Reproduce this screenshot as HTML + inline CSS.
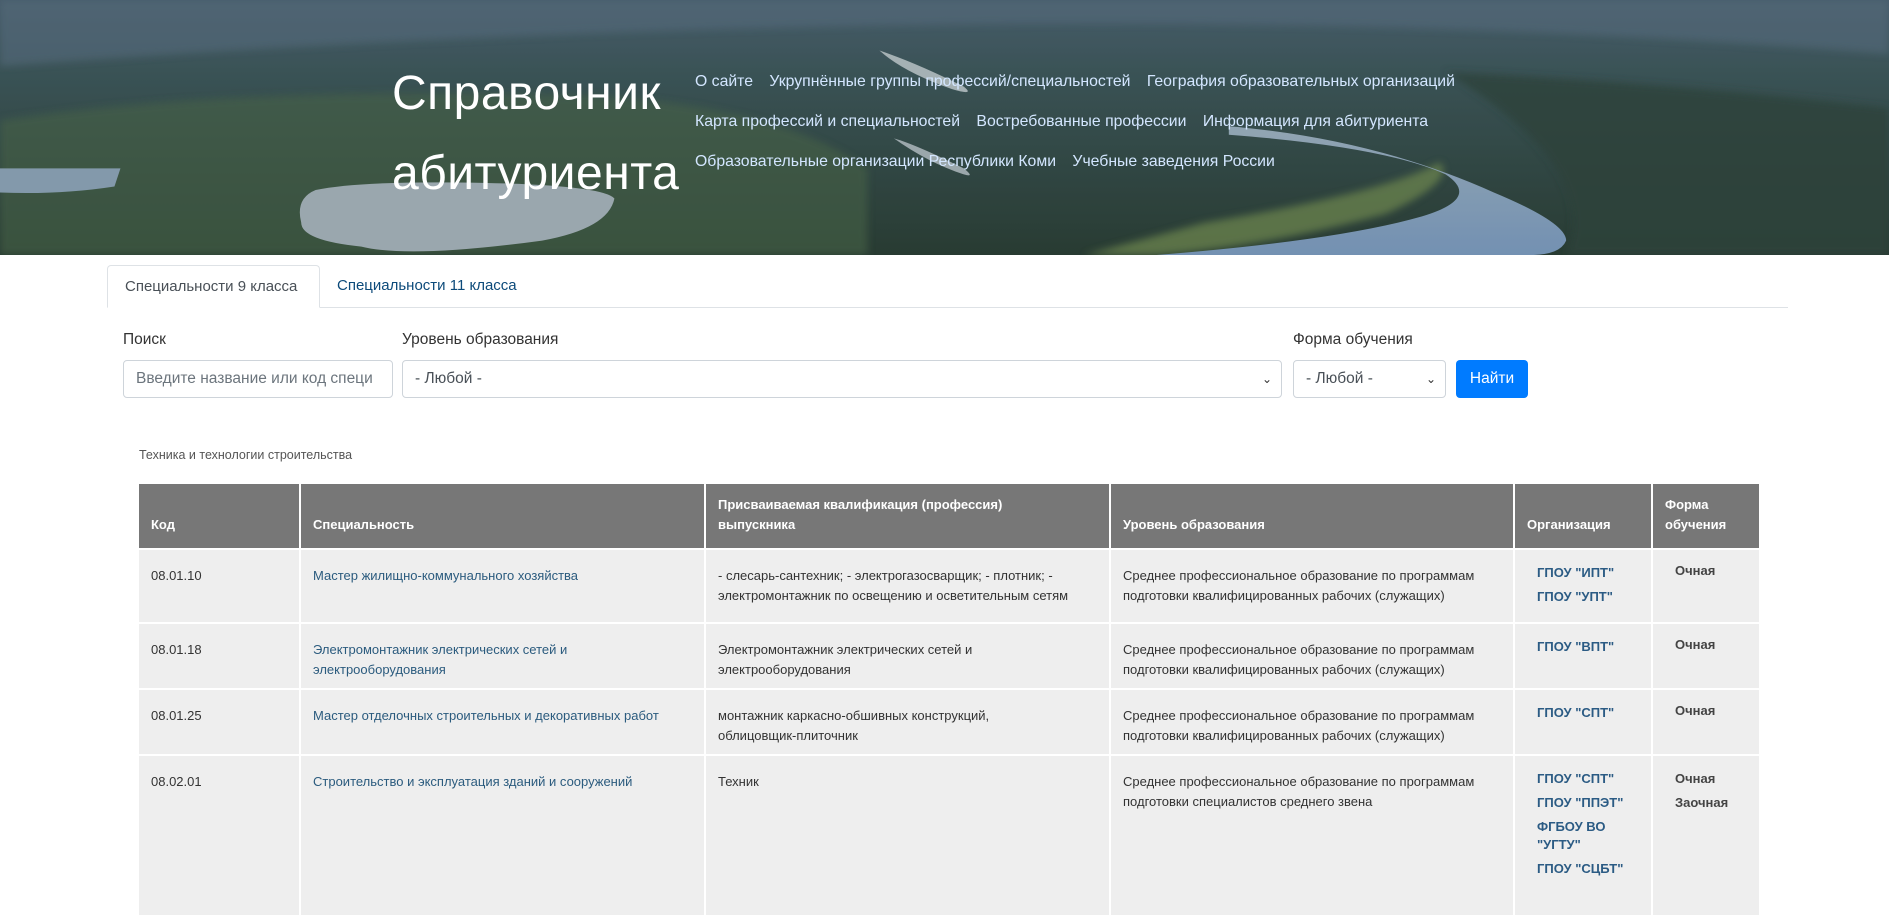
<!DOCTYPE html>
<html><head><meta charset="utf-8">
<style>
*{box-sizing:border-box;margin:0;padding:0}
body{width:1889px;height:871px;overflow:hidden;background:#fff;font-family:"Liberation Sans","DejaVu Sans",sans-serif;color:#333}
.hdr{position:absolute;left:0;top:0;width:1889px;height:255px;overflow:hidden}
.hdr svg{position:absolute;left:0;top:0}
.title{position:absolute;left:392px;top:54px;color:#fff;font-size:48px;line-height:80px;font-family:"Liberation Sans",sans-serif;letter-spacing:0.5px}
.nav{position:absolute;left:695px;top:73px;width:800px}
.nav div{height:40px;font-size:15.8px;color:#d3e6ff;white-space:nowrap}
.nav span{margin-right:12px}
.tabs{position:absolute;left:107px;top:265px;width:1681px;height:43px;border-bottom:1px solid #dee2e6}
.tab{position:absolute;top:0;height:43px;font-size:15px;line-height:42px;padding:0 17px;white-space:nowrap}
.tab.a{left:0;width:213px;border:1px solid #dee2e6;border-bottom:1px solid #fff;border-radius:4px 4px 0 0;color:#495057;background:#fff}
.tab.b{left:213px;color:#0c4a7a}
.lbl{position:absolute;top:331px;font-size:15.5px;color:#333}
.inp{position:absolute;top:360px;height:38px;border:1px solid #ced4da;border-radius:4px;font-size:15.5px;line-height:36px;padding-left:12px;color:#495057;background:#fff}
.inp .ar{position:absolute;right:9px;top:0;font-size:12px;color:#333}
.btn{position:absolute;left:1456px;top:360px;width:72px;height:38px;background:#007bff;border-radius:4px;color:#fff;font-size:15.5px;line-height:38px;text-align:center}
.cat{position:absolute;left:139px;top:448px;font-size:12.5px;color:#555}
table{position:absolute;left:139px;top:484px;width:1620px;border-collapse:collapse;table-layout:fixed;font-size:13px}
th{background:#777;color:#fff;font-weight:bold;text-align:left;vertical-align:bottom;padding:0 12px 13px;height:65px;line-height:20px;border-right:2px solid #fff}
td{background:#eee;vertical-align:top;padding:16px 12px 8px;line-height:20px;border-top:2px solid #fff;border-right:2px solid #fff;color:#333}
th:last-child,td:last-child{border-right:none}
td a{color:#2b5b7e;text-decoration:none}
td.o{padding-left:22px;padding-top:11px;font-weight:bold}
td.o div{color:#2b5b84;line-height:24px}
td.f{padding-left:22px;padding-top:11px;font-weight:bold;color:#444}
td.f div{line-height:24px}
</style></head><body>
<div class="hdr">
<svg width="1889" height="255" viewBox="0 0 1568 212" preserveAspectRatio="none">
<defs>
<linearGradient id="sky" x1="0" y1="0" x2="0" y2="1">
<stop offset="0" stop-color="#4c6270"/><stop offset="0.3" stop-color="#3d5658"/><stop offset="1" stop-color="#2a3d32"/></linearGradient>
<linearGradient id="wat" x1="0" y1="0" x2="0" y2="1"><stop offset="0" stop-color="#9fb2c0"/><stop offset="1" stop-color="#7d9cc0"/></linearGradient>
<filter id="bl"><feGaussianBlur stdDeviation="3"/></filter>
</defs>
<rect width="1568" height="212" fill="url(#sky)"/>
<g filter="url(#bl)">
<path d="M0 100 Q200 70 500 80 Q650 90 720 140 L720 212 L0 212Z" fill="#4c6848" opacity="0.6"/>
<path d="M0 0 L1568 0 L1568 45 Q1200 15 800 20 Q400 25 0 55Z" fill="#5c7282" opacity="0.6"/>
<path d="M1200 60 Q1400 70 1568 90 L1568 212 L1300 212 Q1330 140 1200 60Z" fill="#30463c" opacity="0.8"/>
<path d="M1000 185 Q1150 160 1195 135 Q1210 150 1150 178 Q1050 205 960 212 L900 212Z" fill="#6f8a4f" opacity="0.8"/>
</g>
<path d="M1020 105 Q1140 115 1240 160 Q1300 185 1300 200 Q1295 212 1270 212 L960 212 Q1110 200 1180 180 Q1230 165 1200 145 Q1150 122 1020 112Z" fill="url(#wat)"/>
<path d="M730 42 Q760 52 800 72 Q810 80 790 74 Q750 60 730 42Z" fill="#b5c0c2"/>
<path d="M262 158 Q300 150 400 152 Q500 154 510 165 Q505 190 450 200 Q340 215 300 205 Q250 200 250 185 Q245 165 262 158Z" fill="#a9b5bb"/>
<path d="M0 140 L100 140 L95 155 Q50 162 0 160Z" fill="#8fa5b8"/>
<path d="M742 115 Q760 120 800 140 Q810 148 800 145 Q770 135 742 115Z" fill="#aab5b8"/>
<rect width="1568" height="212" fill="#1e2e3a" opacity="0.1"/>
</svg>
<div class="title">Справочник<br>абитуриента</div>
<div class="nav">
<div><span>О сайте</span> <span>Укрупнённые группы профессий/специальностей</span> <span>География образовательных организаций</span></div>
<div><span>Карта профессий и специальностей</span> <span>Востребованные профессии</span> <span>Информация для абитуриента</span></div>
<div><span>Образовательные организации Республики Коми</span> <span>Учебные заведения России</span></div>
</div>
</div>
<div class="tabs"><div class="tab a">Специальности 9 класса</div><div class="tab b">Специальности 11 класса</div></div>
<div class="lbl" style="left:123px">Поиск</div>
<div class="lbl" style="left:402px">Уровень образования</div>
<div class="lbl" style="left:1293px">Форма обучения</div>
<div class="inp" style="left:123px;width:270px;color:#6c757d;overflow:hidden;white-space:nowrap">Введите название или код специ</div>
<div class="inp" style="left:402px;width:880px">- Любой -<span class="ar">&#8964;</span></div>
<div class="inp" style="left:1293px;width:153px">- Любой -<span class="ar">&#8964;</span></div>
<div class="btn">Найти</div>
<div class="cat">Техника и технологии строительства</div>
<table>
<colgroup><col style="width:161px"><col style="width:405px"><col style="width:405px"><col style="width:404px"><col style="width:138px"><col style="width:107px"></colgroup>
<tr><th>Код</th><th>Специальность</th><th>Присваиваемая квалификация (профессия)<br>выпускника</th><th>Уровень образования</th><th>Организация</th><th>Форма обучения</th></tr>
<tr style="height:74px"><td>08.01.10</td><td><a>Мастер жилищно-коммунального хозяйства</a></td><td>- слесарь-сантехник; - электрогазосварщик; - плотник; - электромонтажник по освещению и осветительным сетям</td><td>Среднее профессиональное образование по программам подготовки квалифицированных рабочих (служащих)</td><td class="o"><div>ГПОУ "ИПТ"</div><div>ГПОУ "УПТ"</div></td><td class="f">Очная</td></tr>
<tr style="height:65px"><td>08.01.18</td><td><a>Электромонтажник электрических сетей и<br>электрооборудования</a></td><td>Электромонтажник электрических сетей и<br>электрооборудования</td><td>Среднее профессиональное образование по программам подготовки квалифицированных рабочих (служащих)</td><td class="o"><div>ГПОУ "ВПТ"</div></td><td class="f">Очная</td></tr>
<tr style="height:65px"><td>08.01.25</td><td><a>Мастер отделочных строительных и декоративных работ</a></td><td>монтажник каркасно-обшивных конструкций,<br>облицовщик-плиточник</td><td>Среднее профессиональное образование по программам подготовки квалифицированных рабочих (служащих)</td><td class="o"><div>ГПОУ "СПТ"</div></td><td class="f">Очная</td></tr>
<tr style="height:160px"><td>08.02.01</td><td><a>Строительство и эксплуатация зданий и сооружений</a></td><td>Техник</td><td>Среднее профессиональное образование по программам подготовки специалистов среднего звена</td><td class="o"><div>ГПОУ "СПТ"</div><div>ГПОУ "ППЭТ"</div><div style="line-height:18px;margin:3px 0">ФГБОУ ВО "УГТУ"</div><div>ГПОУ "СЦБТ"</div></td><td class="f"><div>Очная</div><div>Заочная</div></td></tr>
</table>
</body></html>
